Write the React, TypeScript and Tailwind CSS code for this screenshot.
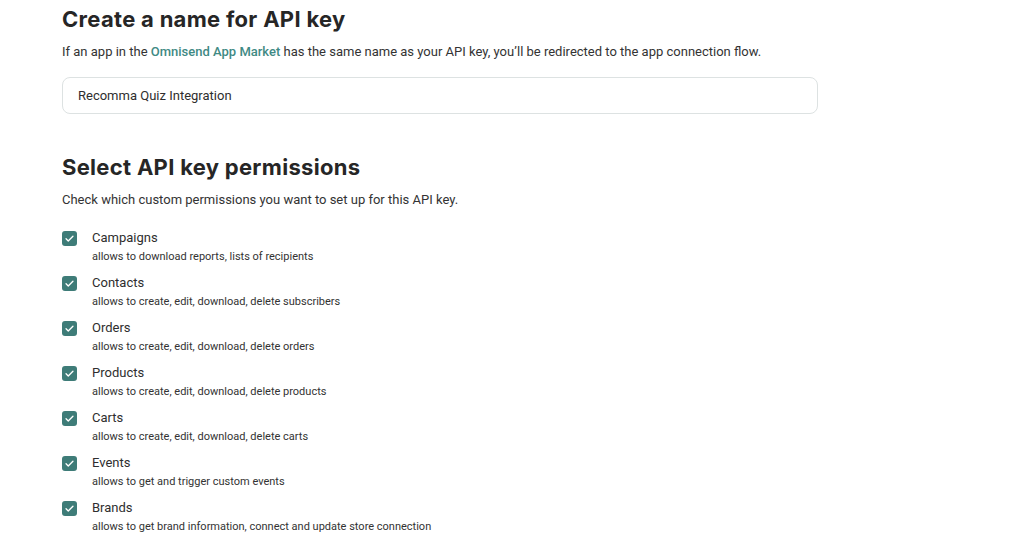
import React from 'react';

const permissions = [
  { name: 'Campaigns', desc: 'allows to download reports, lists of recipients' },
  { name: 'Contacts', desc: 'allows to create, edit, download, delete subscribers' },
  { name: 'Orders', desc: 'allows to create, edit, download, delete orders' },
  { name: 'Products', desc: 'allows to create, edit, download, delete products' },
  { name: 'Carts', desc: 'allows to create, edit, download, delete carts' },
  { name: 'Events', desc: 'allows to get and trigger custom events' },
  { name: 'Brands', desc: 'allows to get brand information, connect and update store connection' },
];

function CheckBox() {
  return (
    <span className="flex h-[15px] w-[15px] shrink-0 items-center justify-center rounded-[3px] bg-[#3e7c78]">
      <svg viewBox="0 0 16 16" className="h-[11px] w-[11px]" fill="none">
        <path d="M3 8.5l3.2 3L13 4.8" stroke="white" strokeWidth="2" strokeLinecap="round" strokeLinejoin="round" />
      </svg>
    </span>
  );
}

export default function App() {
  return (
    <main className="min-h-[545px] bg-white font-['Roboto',sans-serif] text-[#2e2e2e]">
      <div className="w-[756px] ml-[62px] pt-[4px]">
        <h1 className="font-['Inter',sans-serif] text-[22px] font-bold leading-[30px] tracking-[0.3px] text-[#262626]">
          Create a name for API key
        </h1>
        <p className="mt-[9px] text-[13px] leading-[18px] text-[#333]">
          If an app in the <span className="font-medium text-[#3f8a84]">Omnisend App Market</span> has the same name as your API key, you’ll be redirected to the app connection flow.
        </p>
        <div className="mt-[16px] flex h-[37px] items-center rounded-[8px] border border-[#dde2e2] px-[15px] text-[13px] text-[#2e2e2e]">
          Recomma Quiz Integration
        </div>

        <h2 className="mt-[38px] font-['Inter',sans-serif] text-[22px] font-bold leading-[30px] tracking-[0.3px] text-[#262626]">
          Select API key permissions
        </h2>
        <p className="mt-[9px] text-[13px] leading-[18px] text-[#333]">
          Check which custom permissions you want to set up for this API key.
        </p>

        <ul className="mt-[20px] flex flex-col gap-[9px]">
          {permissions.map((p) => (
            <li key={p.name} className="flex gap-[15px]">
              <div className="pt-[2px]">
                <CheckBox />
              </div>
              <div>
                <div className="text-[13px] leading-[18px] text-[#2e2e2e]">{p.name}</div>
                <div className="mt-[1px] text-[11px] leading-[17px] text-[#333]">{p.desc}</div>
              </div>
            </li>
          ))}
        </ul>
      </div>
    </main>
  );
}
